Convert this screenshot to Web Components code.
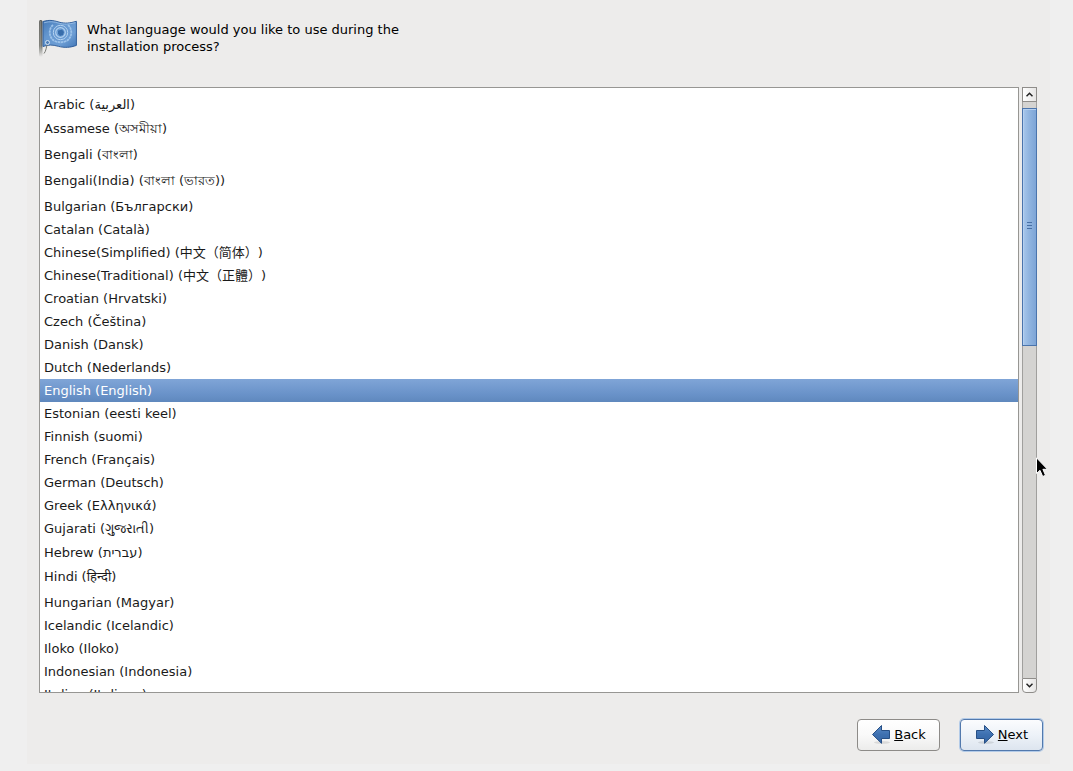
<!DOCTYPE html>
<html lang="en">
<head>
<meta charset="utf-8">
<title>Installer language</title>
<style>
  html, body { margin: 0; height: 100%; }
  body {
    background: #efefef;
    color: #1a1a1a;
    font: 13px/17px "DejaVu Sans", "Noto Sans CJK SC", "Noto Sans", sans-serif;
    text-spacing-trim: space-all;
    overflow: hidden;
  }
</style>
</head>
<body>
<language-installer></language-installer>

<template id="tpl-installer">
  <style>
    :host { display: block; box-sizing: border-box; height: 100vh; padding: 0 23px 7px 27px; }
    main {
      display: flex; flex-direction: column; box-sizing: border-box; height: 100%;
      padding: 18px 7px 13px 12px; background: #edeceb;
    }
    .body { flex: 1; min-height: 0; display: flex; gap: 3px; margin: 29px 6px 26px 0; }
    language-list { flex: 1; min-width: 0; }
    footer { display: flex; justify-content: flex-end; gap: 20px; }
    mouse-pointer { position: absolute; left: 1036px; top: 457px; }
  </style>
  <main>
    <installer-heading>What language would you like to use during the installation process?</installer-heading>
    <div class="body">
      <language-list></language-list>
      <list-scrollbar></list-scrollbar>
    </div>
    <footer>
      <nav-button direction="back"><u>B</u>ack</nav-button>
      <nav-button direction="next"><u>N</u>ext</nav-button>
    </footer>
    <mouse-pointer></mouse-pointer>
  </main>
</template>

<template id="tpl-heading">
  <style>
    :host { display: flex; gap: 10px; height: 40px; }
    svg { flex: none; }
    h1 { margin: 3px 0 0; max-width: 330px; font: inherit; color: #000; }
  </style>
  <svg width="38" height="40" viewBox="0 0 38 40" aria-hidden="true">
    <defs>
      <linearGradient id="cloth" x1="0" y1="0" x2="1" y2="1">
        <stop offset="0" stop-color="#4479b8"/><stop offset=".35" stop-color="#6597cf"/>
        <stop offset=".7" stop-color="#6c9dd4"/><stop offset="1" stop-color="#4478b8"/>
      </linearGradient>
      <linearGradient id="pole" x1="0" y1="0" x2="0" y2="1">
        <stop offset="0" stop-color="#5c5d59"/><stop offset=".7" stop-color="#777872"/>
        <stop offset="1" stop-color="#888a85" stop-opacity="0"/>
      </linearGradient>
    </defs>
    <rect x="0" y="2" width="3.500" height="37" rx="1.500" fill="url(#pole)"/>
    <path d="M1.200 3v32" stroke="#b5b6b1" stroke-width=".8" opacity=".7"/>
    <path d="M4 3.500C10 1.700 14 2.300 20 4.100s11 1 17.400-.8V27.400c-6 2.200-12 2.600-18 .9S9 26.600 4 28.500Z" fill="url(#cloth)" stroke="#315f9b"/>
    <path d="M5 4.800C11 3 15 3.700 20 5.200s10 1 16.400-.6" fill="none" stroke="#a7c8ec" stroke-width=".7"/>
    <g fill="none" stroke="#b4d2f0">
      <circle cx="21.500" cy="14.500" r="7.200" stroke-width="1"/><circle cx="21.500" cy="14.500" r="4.800" stroke-width="1.200"/>
    </g>
    <circle cx="21.500" cy="14.500" r="3" fill="#7fb0e0"/>
    <path d="M14 7c-5 4-4.500 14 3 16.500 3 1 6 1 9 0 7.500-2.500 8-12.500 3-16.500" fill="none" stroke="#9dc3ea" stroke-width="1.800" stroke-dasharray="2.500 .6"/>
    <path d="M19 12.500l4-1 2 2.500-1 3-3 1-2-2Z" fill="#386dab"/>
    <path d="M5 35.500c2-2 2.500-7 3.500-11" fill="none" stroke="#777974"/>
    <circle cx="8.500" cy="24.500" r="2" fill="#4e7fb8" stroke="#d6e4f3"/>
  </svg>
  <h1><slot></slot></h1>
</template>

<template id="tpl-list">
  <style>
    :host { display: flex; box-sizing: border-box; border: 1px solid #979693; background: #fff; }
    ul { flex: 1; margin: 0; padding: 0; list-style: none; overflow: hidden; outline: 0; }
  </style>
  <ul role="listbox" aria-label="Language" tabindex="0"></ul>
</template>

<template id="tpl-option">
  <style>
    :host { display: block; box-sizing: border-box; height: 23px; padding: 0 4px; line-height: 23px; white-space: nowrap; cursor: default; }
    :host([script="medium"]) { height: 24px; }
    :host([script="tall"]) { height: 26px; }
    :host([selected]) { color: #fff; background: linear-gradient(#80a5d7, #6891c8 70%, #5f88bd); }
  </style>
  <slot></slot>
</template>

<template id="tpl-scrollbar">
  <style>
    :host { display: flex; flex-direction: column; width: 15px; }
    button {
      display: flex; align-items: center; justify-content: center; box-sizing: border-box;
      width: 15px; height: 15px; margin: 0; padding: 0; border: 1px solid #8f8d8a;
      background: linear-gradient(to right, #fff, #e6e5e4);
    }
    button:first-child { border-radius: 4px 4px 0 0; }
    button:last-child { border-radius: 0 0 4px 4px; }
    .trough { flex: 1; display: flex; flex-direction: column; border: solid #a09f9d; border-width: 0 1px; background: #d4d3d1; }
    .before { flex: 6; }
    .after { flex: 334; }
    .thumb {
      flex: 235; display: flex; flex-direction: column; align-items: center; justify-content: center; gap: 2px;
      margin: 0 -1px; border: 1px solid #4a74ac; box-sizing: border-box; padding-bottom: 2px;
      background: linear-gradient(to right, #a8c7eb, #91b5e0 45%, #7ea5d6);
      box-shadow: inset 1px 1px #b5d0f0;
    }
    i { width: 5px; height: 1px; background: #4870a5; }
  </style>
  <button type="button" aria-label="Scroll up"><svg width="7" height="5" viewBox="0 0 7 5"><path d="M.5 4.200l3-3 3 3" fill="none" stroke="#222" stroke-width="1.500"/></svg></button>
  <div class="trough"><div class="before"></div><div class="thumb"><i></i><i></i><i></i></div><div class="after"></div></div>
  <button type="button" aria-label="Scroll down"><svg width="7" height="5" viewBox="0 0 7 5"><path d="M.5 .8l3 3 3-3" fill="none" stroke="#222" stroke-width="1.500"/></svg></button>
</template>

<template id="tpl-nav">
  <style>
    :host { display: block; }
    button {
      display: flex; align-items: center; justify-content: center; gap: 3px; box-sizing: border-box;
      width: 83px; height: 32px; margin: 0; padding: 0 0 2px; border: 1px solid #8d8b88; border-radius: 4px;
      background: linear-gradient(#fff, #f9f9f9 50%, #ececeb); color: #000; font: inherit;
    }
    :host([direction="next"]) button {
      border-color: #5279ad; box-shadow: 0 0 0 1px #b3cbe8;
      background: linear-gradient(#fbfcfe, #edf2f8 50%, #dde5ef);
    }
    :host([direction="next"]) svg .arrow { transform: scaleX(-1); transform-origin: 10px 10px; }
    svg { flex: none; }
  </style>
  <button type="button">
    <svg width="20" height="20" viewBox="0 0 20 20" aria-hidden="true">
      <defs><linearGradient id="fill" x1="0" y1="0" x2="0" y2="1"><stop offset="0" stop-color="#5b8cc8"/><stop offset=".5" stop-color="#3e70b0"/><stop offset="1" stop-color="#3465a4"/></linearGradient></defs>
      <ellipse cx="11" cy="18.500" rx="8" ry="1.500" fill="#000" opacity=".1"/>
      <path class="arrow" d="M1.500 10.500L10.500 1.500V6.500H18.500V14.500H10.500V19.300Z" fill="url(#fill)" stroke="#274f85" stroke-linejoin="round"/>
    </svg>
    <span><slot></slot></span>
  </button>
</template>

<template id="tpl-pointer">
  <style>:host { display: block; width: 12px; height: 21px; pointer-events: none; }</style>
  <svg width="12" height="21" viewBox="0 0 12 21" aria-hidden="true"><path d="M.5 .8V16.500L4 13.300L6.700 19.500L9.500 18.300L6.900 12.300H11.500Z" fill="#000" stroke="#fff"/></svg>
</template>

<script>
  class TemplateElement extends HTMLElement {
    constructor() {
      super();
      const source = document.getElementById(this.constructor.template);
      this.attachShadow({ mode: "open" }).append(source.content.cloneNode(true));
    }
  }

  const LANGUAGES = [
    ["Afrikaans (Afrikaans)"],
    ["Arabic (العربية)", "medium"],
    ["Assamese (অসমীয়া)", "tall"],
    ["Bengali (বাংলা)", "tall"],
    ["Bengali(India) (বাংলা (ভারত))", "tall"],
    ["Bulgarian (Български)"],
    ["Catalan (Català)"],
    ["Chinese(Simplified) (中文（简体）)"],
    ["Chinese(Traditional) (中文（正體）)"],
    ["Croatian (Hrvatski)"],
    ["Czech (Čeština)"],
    ["Danish (Dansk)"],
    ["Dutch (Nederlands)"],
    ["English (English)"],
    ["Estonian (eesti keel)"],
    ["Finnish (suomi)"],
    ["French (Français)"],
    ["German (Deutsch)"],
    ["Greek (Ελληνικά)"],
    ["Gujarati (ગુજરાતી)", "medium"],
    ["Hebrew (עברית)", "medium"],
    ["Hindi (हिन्दी)", "tall"],
    ["Hungarian (Magyar)"],
    ["Icelandic (Icelandic)"],
    ["Iloko (Iloko)"],
    ["Indonesian (Indonesia)"],
    ["Italian (Italiano)"]
  ];

  class LanguageOption extends TemplateElement {
    static template = "tpl-option";
    connectedCallback() {
      this.setAttribute("role", "option");
      this.setAttribute("aria-selected", String(this.hasAttribute("selected")));
    }
  }

  class LanguageList extends TemplateElement {
    static template = "tpl-list";
    connectedCallback() {
      const list = this.shadowRoot.querySelector("ul");
      for (const [label, script] of LANGUAGES) {
        const option = document.createElement("language-option");
        option.textContent = label;
        if (script) option.setAttribute("script", script);
        if (label.startsWith("English")) option.setAttribute("selected", "");
        list.append(option);
      }
      list.addEventListener("click", (event) => {
        const picked = event.target.closest("language-option");
        if (!picked) return;
        for (const option of list.children) {
          option.toggleAttribute("selected", option === picked);
          option.setAttribute("aria-selected", String(option === picked));
        }
      });
      list.scrollTop = 18;
    }
  }

  customElements.define("language-option", LanguageOption);
  customElements.define("installer-heading", class extends TemplateElement { static template = "tpl-heading"; });
  customElements.define("list-scrollbar", class extends TemplateElement { static template = "tpl-scrollbar"; });
  customElements.define("nav-button", class extends TemplateElement { static template = "tpl-nav"; });
  customElements.define("mouse-pointer", class extends TemplateElement { static template = "tpl-pointer"; });
  customElements.define("language-list", LanguageList);
  customElements.define("language-installer", class extends TemplateElement { static template = "tpl-installer"; });

  requestAnimationFrame(() => {
    const app = document.querySelector("language-installer").shadowRoot;
    app.querySelector("language-list").shadowRoot.querySelector("ul").scrollTop = 18;
  });
</script>
</body>
</html>
